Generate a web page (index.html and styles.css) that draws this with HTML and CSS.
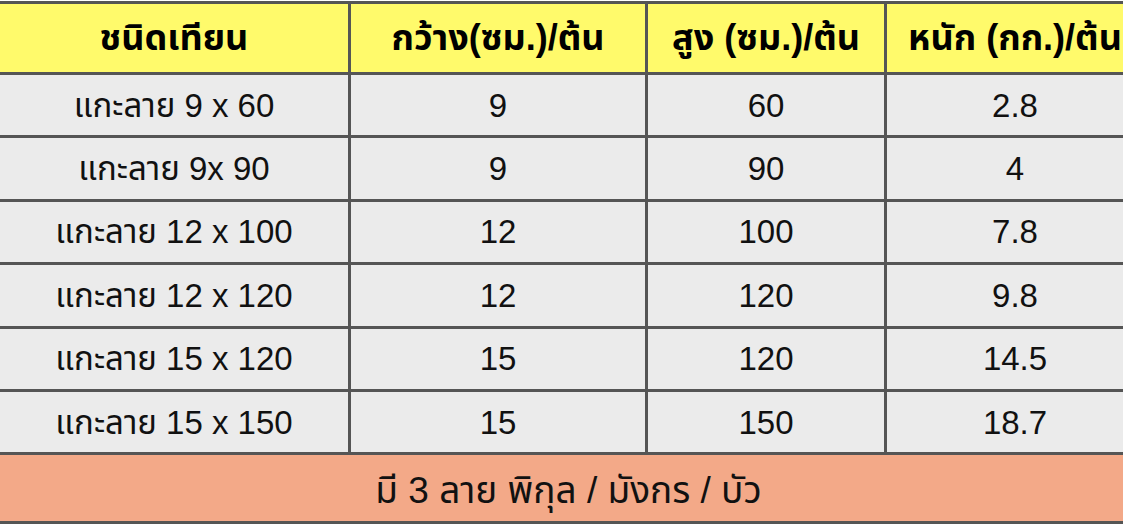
FILE: index.html
```html
<!DOCTYPE html>
<html lang="th">
<head>
<meta charset="utf-8">
<title>ชนิดเทียน</title>
<link rel="stylesheet" href="styles.css">
</head>
<body>
<table class="candles">
  <colgroup>
    <col class="c1"><col class="c2"><col class="c3"><col class="c4">
  </colgroup>
  <thead>
    <tr class="head">
      <th>ชนิดเทียน</th>
      <th>กว้าง(ซม.)/ต้น</th>
      <th>สูง (ซม.)/ต้น</th>
      <th>หนัก (กก.)/ต้น</th>
    </tr>
  </thead>
  <tbody>
    <tr class="row"><td>แกะลาย 9 x 60</td><td>9</td><td>60</td><td>2.8</td></tr>
    <tr class="row"><td>แกะลาย 9x 90</td><td>9</td><td>90</td><td>4</td></tr>
    <tr class="row"><td>แกะลาย 12 x 100</td><td>12</td><td>100</td><td>7.8</td></tr>
    <tr class="row"><td>แกะลาย 12 x 120</td><td>12</td><td>120</td><td>9.8</td></tr>
    <tr class="row"><td>แกะลาย 15 x 120</td><td>15</td><td>120</td><td>14.5</td></tr>
    <tr class="row"><td>แกะลาย 15 x 150</td><td>15</td><td>150</td><td>18.7</td></tr>
    <tr class="foot"><td colspan="4"><span class="foot-text">มี 3 ลาย พิกุล / มังกร / บัว</span></td></tr>
  </tbody>
</table>
</body>
</html>
```
FILE: styles.css
```css
html, body {
  margin: 0;
  padding: 0;
  overflow: hidden;
  background: #ffffff;
}
body {
  width: 1123px;
  height: 526px;
  font-family: "Liberation Sans", "Noto Sans Thai", "Noto Sans", "DejaVu Sans", sans-serif;
  color: #111111;
}
.candles {
  border-collapse: collapse;
  table-layout: fixed;
  width: 1146px;
  margin-left: -3px;
  margin-top: 1px;
}
.c1 { width: 351px; }
.c2 { width: 297px; }
.c3 { width: 239px; }
.c4 { width: 259px; }
.candles th,
.candles td {
  border: 3px solid #555555;
  text-align: center;
  padding: 0;
  font-size: 33px;
  line-height: 1;
  white-space: nowrap;
}
.head th {
  background: #fffa6b;
  font-weight: bold;
  font-size: 36px;
  height: 68px;
  color: #000000;
}
.row td {
  background: #ebebeb;
  height: 60.4px;
  font-weight: normal;
}
.foot td {
  background: #f3a988;
  height: 66px;
  font-size: 37px;
  text-align: center;
}
.foot-text {
  position: relative;
  left: -3px;
  top: 2px;
}
```
